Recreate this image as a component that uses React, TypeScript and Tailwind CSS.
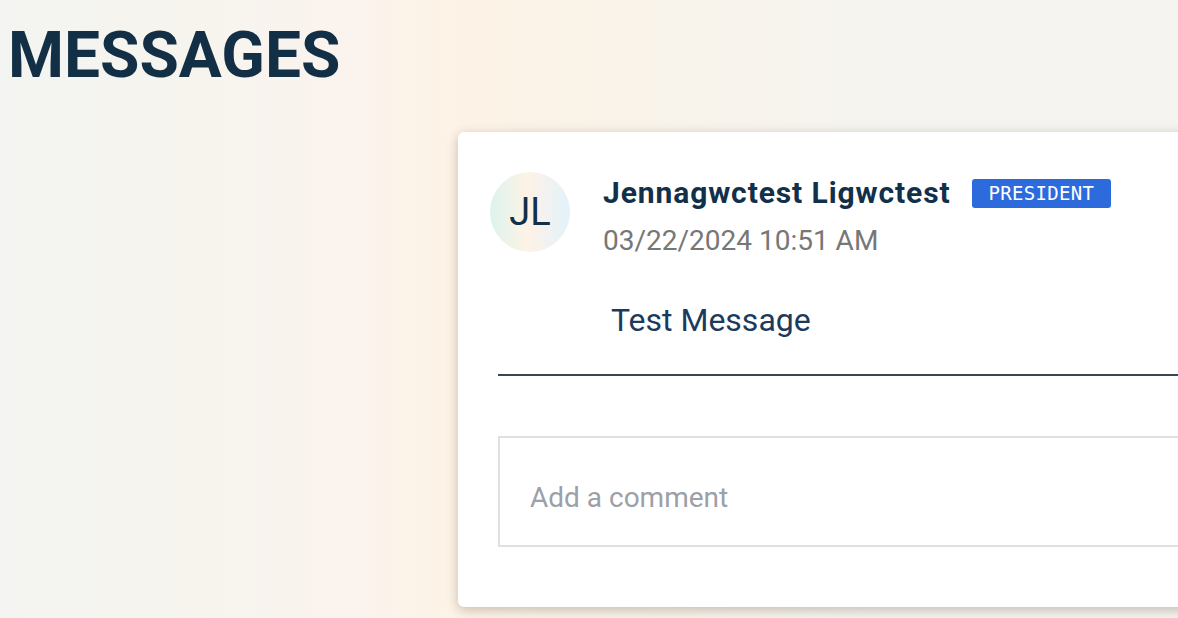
import React from 'react';

const MessageCard: React.FC = () => {
  return (
    <div className="ml-[458px] mt-[44px] w-[800px] rounded-[6px] bg-white pl-[32px] pr-[40px] pt-[40px] pb-[60px] shadow-[0_3px_12px_rgba(60,40,20,0.28)]">
      <div className="flex">
        <div className="flex h-[80px] w-[80px] shrink-0 items-center justify-center rounded-full bg-[linear-gradient(90deg,#dcf3ef_0%,#fdf3e5_45%,#fbf1ea_55%,#e1f3fb_100%)] text-[38px] text-[#12304a]">
          JL
        </div>
        <div className="ml-[33px] mt-[3px]">
          <div className="flex items-center">
            <span className="text-[30px] font-bold leading-[36px] tracking-[0.9px] text-[#12304a]">Jennagwctest Ligwctest</span>
            <span className="ml-[21px] flex h-[29px] items-center rounded-[3px] bg-[#2d6bdc] px-[17px] font-['DejaVu_Sans_Mono',monospace] text-[19px] tracking-[0.3px] text-white">
              PRESIDENT
            </span>
          </div>
          <div className="mt-[12px] text-[28px] leading-[36px] text-[#777777]">03/22/2024 10:51 AM</div>
        </div>
      </div>

      <p className="ml-[121px] mt-[41px] text-[32px] leading-[40px] text-[#1b3a60]">Test Message</p>

      <div className="ml-[8px] mt-[34px] h-[2px] bg-[#3a4650]" />

      <div className="ml-[8px] mt-[60px] flex h-[111px] items-center border-2 border-[#e0e0e0] pl-[30px] pt-[12px] text-[28px] text-[#9ca0a8]">
        Add a comment
      </div>
    </div>
  );
};

export default function App() {
  return (
    <div className="h-[618px] w-full overflow-hidden bg-[linear-gradient(90deg,#f3f4f1_0%,#f8f4ee_20%,#fbf3ee_30%,#fdf3e6_38%,#f9f3ea_55%,#f5f4f0_75%,#f5f4f0_100%)] font-['Roboto',sans-serif]">
      <h1 className="pl-[8px] pt-[24px] text-[64px] font-bold leading-[64px] text-[#122f45]">MESSAGES</h1>
      <MessageCard />
    </div>
  );
}
